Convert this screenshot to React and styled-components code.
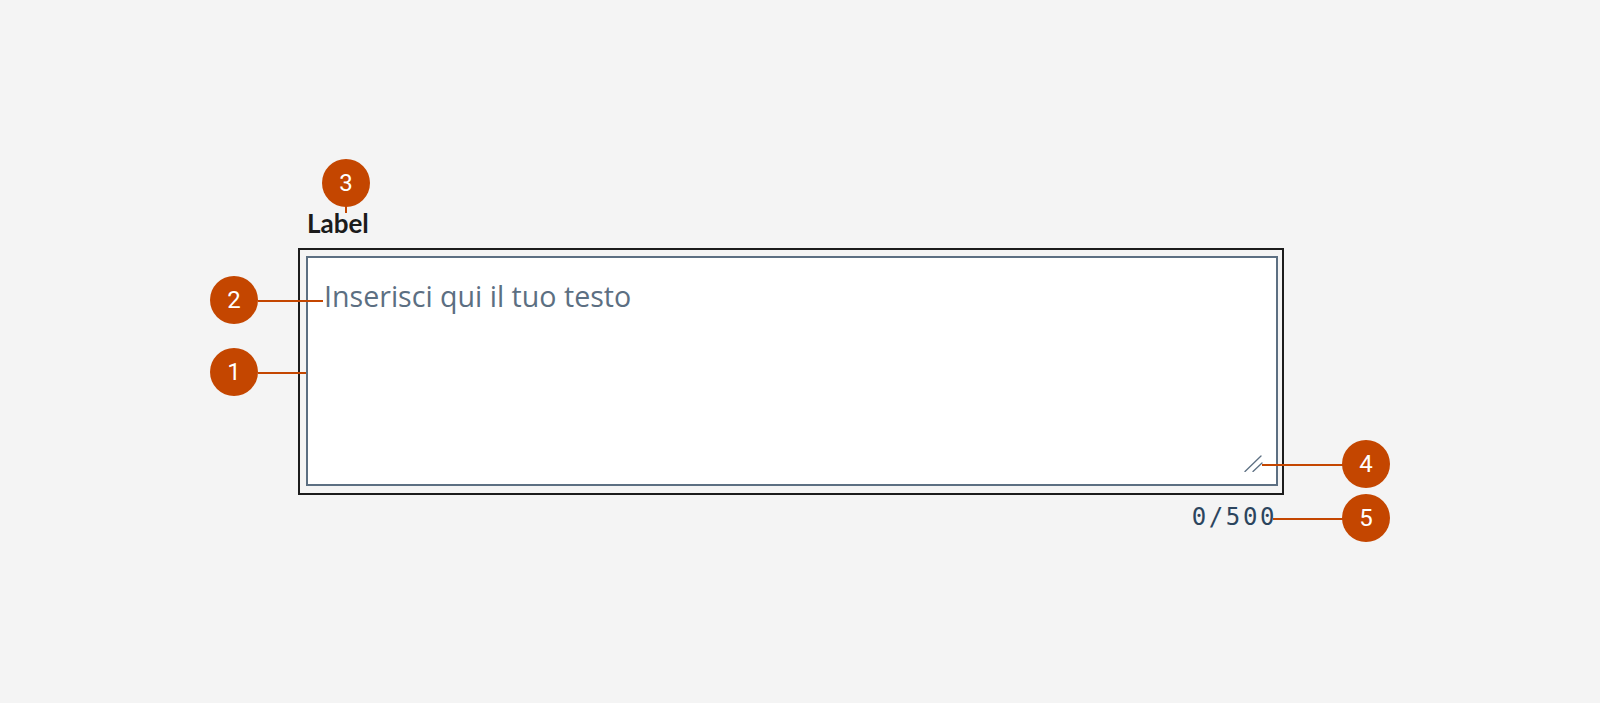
import React from 'react';
import styled, { createGlobalStyle } from 'styled-components';

const GlobalStyle = createGlobalStyle`
  html, body {
    margin: 0;
    padding: 0;
    background: #f4f4f4;
  }
  * {
    box-sizing: border-box;
  }
`;

const Stage = styled.div`
  position: relative;
  width: 1600px;
  height: 703px;
  padding: 207px 0 0 298px;
  background: #f4f4f4;
  overflow: hidden;
`;

const Field = styled.div`
  display: flex;
  flex-direction: column;
  width: 986px;
`;

const Label = styled.label`
  margin: 0 0 9px 9px;
  font-family: Lato, 'Open Sans', sans-serif;
  font-weight: 700;
  font-size: 26px;
  line-height: 32px;
  color: #1b1b1b;
`;

const FocusFrame = styled.div`
  border: 2px solid #1c1c1c;
  padding: 6px 4px 7px 6px;
`;

const AreaWrap = styled.div`
  position: relative;
  width: 972px;
  height: 230px;
`;

const TextArea = styled.textarea`
  display: block;
  width: 100%;
  height: 100%;
  margin: 0;
  padding: 18px 16px;
  border: 2px solid #5c6f82;
  border-radius: 0;
  background: #ffffff;
  font-family: 'Open Sans', sans-serif;
  font-size: 28.6px;
  line-height: 1.4;
  color: #17324d;
  resize: none;
  outline: none;
  &::placeholder {
    color: #5c6f82;
    opacity: 1;
  }
`;

const Grip = styled.svg`
  position: absolute;
  right: 15px;
  bottom: 14px;
  width: 19px;
  height: 17px;
  pointer-events: none;
`;

const Counter = styled.span`
  align-self: flex-end;
  margin: 8px 7px 0 0;
  font-family: 'DejaVu Sans Mono', 'Liberation Mono', monospace;
  font-size: 24px;
  line-height: 28px;
  letter-spacing: 2.6px;
  color: #2c455e;
`;

// annotation overlay
const Marker = styled.div`
  position: absolute;
  left: ${(p) => p.$x - 24}px;
  top: ${(p) => p.$y - 24}px;
  width: 48px;
  height: 48px;
  border-radius: 50%;
  background: #c44600;
  color: #ffffff;
  display: flex;
  align-items: center;
  justify-content: center;
  font-family: Roboto, 'Liberation Sans', sans-serif;
  font-size: 24px;
  line-height: 1;
`;

const Leader = styled.div`
  position: absolute;
  left: ${(p) => p.$x}px;
  top: ${(p) => p.$y}px;
  width: ${(p) => p.$w}px;
  height: ${(p) => p.$h}px;
  background: #c44600;
`;

const notes = [
  { n: 1, x: 234, y: 372, line: { x: 258, y: 372, w: 48, h: 2 } },
  { n: 2, x: 234, y: 300, line: { x: 258, y: 300, w: 65, h: 2 } },
  { n: 3, x: 346, y: 183, line: { x: 345, y: 206, w: 2, h: 7 } },
  { n: 4, x: 1366, y: 464, line: { x: 1262, y: 464, w: 81, h: 2 } },
  { n: 5, x: 1366, y: 518, line: { x: 1273, y: 518, w: 70, h: 2 } },
];

const App = () => {
  return (
    <>
      <GlobalStyle />
      <Stage>
        <Field>
          <Label htmlFor="testo">Label</Label>
          <FocusFrame>
            <AreaWrap>
              <TextArea id="testo" placeholder="Inserisci qui il tuo testo" />
              <Grip viewBox="0 0 19 17" aria-hidden="true">
                <path
                  d="M1 16.5 L17 1 M9 16.5 L18 8"
                  stroke="#5c6f82"
                  strokeWidth="1.3"
                  strokeLinecap="round"
                  fill="none"
                />
              </Grip>
            </AreaWrap>
          </FocusFrame>
          <Counter>0/500</Counter>
        </Field>
        {notes.map((note) => (
          <React.Fragment key={note.n}>
            <Leader
              $x={note.line.x}
              $y={note.line.y}
              $w={note.line.w}
              $h={note.line.h}
            />
            <Marker $x={note.x} $y={note.y}>
              {note.n}
            </Marker>
          </React.Fragment>
        ))}
      </Stage>
    </>
  );
};

export default App;
